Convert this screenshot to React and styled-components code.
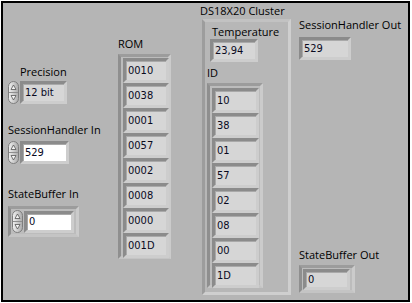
import React from "react";
import styled, { createGlobalStyle } from "styled-components";

const GlobalStyle = createGlobalStyle`
  html, body { margin: 0; padding: 0; background: #fff; }
  body { width: 412px; height: 303px; overflow: hidden; }
`;

const Panel = styled.div`
  margin: 1px 0 0 1px;
  width: 409px;
  height: 301px;
  box-sizing: border-box;
  border: 2px solid #000;
  background: #b5b5b5;
  display: flex;
  align-items: flex-start;
  font-family: "Open Sans", "Noto Sans", sans-serif;
`;

const Column = styled.div`
  margin-left: ${(p) => p.$left}px;
  width: ${(p) => p.$width}px;
  align-self: stretch;
  display: flex;
  flex-direction: column;
  align-items: flex-start;
  padding-bottom: ${(p) => p.$bottom || 0}px;
  box-sizing: border-box;
`;

const Label = styled.div`
  font-size: 11px;
  line-height: 14px;
  color: #000;
  white-space: nowrap;
  margin-top: ${(p) => p.$top || 0}px;
  padding-left: ${(p) => p.$indent || 0}px;
`;

const Row = styled.div`
  display: flex;
  align-items: center;
  gap: 1px;
  margin-top: ${(p) => p.$top || 0}px;
`;

const Field = styled.div`
  box-sizing: border-box;
  width: ${(p) => p.$w}px;
  height: ${(p) => p.$h || 23}px;
  border: 3px solid;
  border-color: #8b8b8b #cdcdcd #cdcdcd #8b8b8b;
  box-shadow: inset 1px 1px 0 #a9a9a9;
  background: ${(p) => (p.$control ? "#fff" : "#d6d6d6")};
  padding-left: 2px;
  font-family: "DejaVu Sans Condensed", "DejaVu Sans", sans-serif;
  font-stretch: condensed;
  font-size: 11px;
  line-height: ${(p) => (p.$h || 23) - 6}px;
  color: #0a0a1e;
  margin-top: ${(p) => p.$top || 0}px;
  margin-left: ${(p) => p.$left || 0}px;
`;

const Frame = styled.div`
  box-sizing: border-box;
  display: flex;
  flex-direction: ${(p) => (p.$column ? "column" : "row")};
  align-items: ${(p) => (p.$column ? "flex-start" : "center")};
  width: ${(p) => p.$w}px;
  height: ${(p) => p.$h}px;
  border: 3px solid;
  border-color: #9c9c9c #cbcbcb #c4c4c4 #8f8f8f;
  background: #bcbcbc;
  padding: ${(p) => p.$pad || "1px 2px"};
  gap: ${(p) => p.$gap || 0}px;
  margin-top: ${(p) => p.$top || 0}px;
`;

const Cluster = styled.div`
  box-sizing: border-box;
  width: 89px;
  height: 276px;
  margin-top: 1px;
  margin-left: 2px;
  border: 3px solid;
  border-color: #c2c2c2 #cfcfcf #cfcfcf #9d9d9d;
  background: #b7b7b7;
  padding: 3px 0 0 2px;
  display: flex;
  flex-direction: column;
  align-items: flex-start;
`;

const Spacer = styled.div`
  flex: 1;
`;

const Spinner = () => (
  <svg width="11" height="23" viewBox="0 0 11 23">
    <defs>
      <linearGradient id="spin" x1="0" x2="1" y1="0" y2="0">
        <stop offset="0" stopColor="#f2f2f2" />
        <stop offset="1" stopColor="#a9a9a9" />
      </linearGradient>
    </defs>
    <rect x="0.5" y="0.5" width="10" height="22" rx="5" fill="url(#spin)" stroke="#7e7e7e" />
    <line x1="1" y1="11.5" x2="10" y2="11.5" stroke="#8e8e8e" />
    <path d="M5.5 4 L8 8.5 H3 Z" fill="#f4f4f4" stroke="#555" strokeWidth="0.8" />
    <path d="M5.5 19 L8 14.5 H3 Z" fill="#f4f4f4" stroke="#555" strokeWidth="0.8" />
  </svg>
);

const rom = ["0010", "0038", "0001", "0057", "0002", "0008", "0000", "001D"];
const ids = ["10", "38", "01", "57", "02", "08", "00", "1D"];

export default function App() {
  return (
    <>
      <GlobalStyle />
      <Panel>
        <Column $left={5} $width={100}>
          <Label $top={62} $indent={12}>Precision</Label>
          <Row $top={2}>
            <Spinner />
            <Field $w={47}>12 bit</Field>
          </Row>
          <Label $top={19}>SessionHandler In</Label>
          <Row $top={4}>
            <Spinner />
            <Field $w={49} $control>529</Field>
          </Row>
          <Label $top={23}>StateBuffer In</Label>
          <Frame $w={71} $h={31} $top={5} $pad="0 2px 0 1px" $gap={1}>
            <Spinner />
            <Field $w={50} $h={22} $control>0</Field>
          </Frame>
        </Column>

        <Column $left={10} $width={53}>
          <Label $top={34}>ROM</Label>
          <Frame $column $w={53} $h={205} $top={3} $pad="1px 2px">
            {rom.map((v) => (
              <Field key={v} $w={46} $h={25}>{v}</Field>
            ))}
          </Frame>
        </Column>

        <Column $left={29} $width={93}>
          <Label $top={1}>DS18X20 Cluster</Label>
          <Cluster>
            <Label $indent={5}>Temperature</Label>
            <Field $w={48} $h={23} $left={3}>23,94</Field>
            <Label $top={4}>ID</Label>
            <Frame $column $w={56} $h={205} $top={3} $pad="2px 2px">
              {ids.map((v) => (
                <Field key={v} $w={47} $h={25}>{v}</Field>
              ))}
            </Frame>
          </Cluster>
        </Column>

        <Column $left={6} $width={100} $bottom={7}>
          <Label $top={15}>SessionHandler Out</Label>
          <Field $w={52} $h={23} $top={5}>529</Field>
          <Spacer />
          <Label>StateBuffer Out</Label>
          <Frame $w={56} $h={28} $top={3} $pad="0 2px 0 1px">
            <Field $w={49} $h={21}>0</Field>
          </Frame>
        </Column>
      </Panel>
    </>
  );
}
